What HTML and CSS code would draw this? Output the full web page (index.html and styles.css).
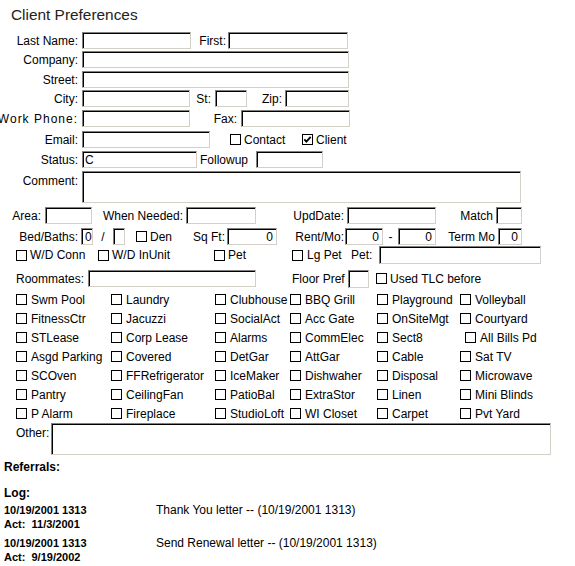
FILE: index.html
```html
<!DOCTYPE html>
<html>
<head>
<meta charset="utf-8">
<title>Client Preferences</title>
<link rel="stylesheet" href="styles.css">
</head>
<body>
<div class="page">
  <h1 class="title">Client Preferences</h1>

  <div class="row r1">
    <label class="lab w78">Last Name:</label><input class="fld ml4 w109">
    <label class="lab w35">First:</label><input class="fld ml2 w120">
  </div>
  <div class="row mt2">
    <label class="lab w78">Company:</label><input class="fld ml4 w267">
  </div>
  <div class="row mt3">
    <label class="lab w78">Street:</label><input class="fld ml4 w267">
  </div>
  <div class="row mt2">
    <label class="lab w78">City:</label><input class="fld ml4 w108">
    <label class="lab w21">St:</label><input class="fld ml4 w32">
    <label class="lab w35">Zip:</label><input class="fld ml3 w64">
  </div>
  <div class="row mt3">
    <label class="lab w78 wide">Work Phone:</label><input class="fld ml4 w108">
    <label class="lab w47">Fax:</label><input class="fld ml4 w109">
  </div>
  <div class="row mt4">
    <label class="lab w78">Email:</label><input class="fld ml4 w128">
    <span class="chk ml20 w72"><span class="cb"></span>Contact</span>
    <span class="chk"><svg class="cbsvg" width="11" height="11" viewBox="0 0 11 11"><rect x="0.5" y="0.5" width="10" height="10" fill="#fff" stroke="#000"/><path d="M2.3 5.3 L4.4 7.6 L8.7 2.8" fill="none" stroke="#000" stroke-width="1.8"/></svg>Client</span>
  </div>
  <div class="row mt3">
    <label class="lab w78">Status:</label><input class="fld ml4 w115" value="C">
    <label class="lab left ml3 w53">Followup</label><input class="fld ml3 w67">
  </div>
  <div class="row tall mt3">
    <label class="lab w78 top">Comment:</label><textarea class="fld area ml4 w439"></textarea>
  </div>
  <div class="row mt4">
    <label class="lab w41">Area:</label><input class="fld ml4 w47">
    <label class="lab w91">When Needed:</label><input class="fld ml3 w70">
    <label class="lab w88">UpdDate:</label><input class="fld ml3 w89">
    <label class="lab w57">Match</label><input class="fld ml3 w26">
  </div>
  <div class="row mt4">
    <label class="lab w78">Bed/Baths:</label><input class="fld ml3 w12 tiny" value="0">
    <span class="sep w20">/</span><input class="fld w12 tiny">
    <span class="chk ml11 w50"><span class="cb"></span>Den</span>
    <label class="lab w39">Sq Ft:</label><input class="fld ml2 w50 num" value="0">
    <label class="lab w67">Rent/Mo:</label><input class="fld ml1 w38 num" value="0">
    <span class="sep w15">-</span><input class="fld w38 num" value="0">
    <label class="lab w59">Term Mo</label><input class="fld ml3 w24 num" value="0">
  </div>
  <div class="row h18 mt1 indent">
    <span class="chk w82"><span class="cb"></span>W/D Conn</span>
    <span class="chk w116"><span class="cb"></span>W/D InUnit</span>
    <span class="chk w78"><span class="cb"></span>Pet</span>
    <span class="chk w59 wgap"><span class="cb"></span>Lg Pet</span>
    <label class="lab left w28">Pet:</label><input class="fld h18 w162">
  </div>
  <div class="row mt6 indent">
    <label class="lab left w72">Roommates:</label><input class="fld w168">
    <label class="lab left ml36 w56">Floor Pref</label><input class="fld h18 w21">
    <span class="chk ml7"><span class="cb"></span>Used TLC before</span>
  </div>

  <div class="amenities">
    <span class="chk"><span class="cb"></span>Swm Pool</span>
    <span class="chk"><span class="cb"></span>Laundry</span>
    <span class="chk"><span class="cb"></span>Clubhouse</span>
    <span class="chk"><span class="cb"></span>BBQ Grill</span>
    <span class="chk"><span class="cb"></span>Playground</span>
    <span class="chk"><span class="cb"></span>Volleyball</span>

    <span class="chk"><span class="cb"></span>FitnessCtr</span>
    <span class="chk"><span class="cb"></span>Jacuzzi</span>
    <span class="chk"><span class="cb"></span>SocialAct</span>
    <span class="chk"><span class="cb"></span>Acc Gate</span>
    <span class="chk"><span class="cb"></span>OnSiteMgt</span>
    <span class="chk"><span class="cb"></span>Courtyard</span>

    <span class="chk"><span class="cb"></span>STLease</span>
    <span class="chk"><span class="cb"></span>Corp Lease</span>
    <span class="chk"><span class="cb"></span>Alarms</span>
    <span class="chk"><span class="cb"></span>CommElec</span>
    <span class="chk"><span class="cb"></span>Sect8</span>
    <span class="chk shift"><span class="cb"></span>All Bills Pd</span>

    <span class="chk"><span class="cb"></span>Asgd Parking</span>
    <span class="chk"><span class="cb"></span>Covered</span>
    <span class="chk"><span class="cb"></span>DetGar</span>
    <span class="chk"><span class="cb"></span>AttGar</span>
    <span class="chk"><span class="cb"></span>Cable</span>
    <span class="chk"><span class="cb"></span>Sat TV</span>

    <span class="chk"><span class="cb"></span>SCOven</span>
    <span class="chk"><span class="cb"></span>FFRefrigerator</span>
    <span class="chk"><span class="cb"></span>IceMaker</span>
    <span class="chk"><span class="cb"></span>Dishwaher</span>
    <span class="chk"><span class="cb"></span>Disposal</span>
    <span class="chk"><span class="cb"></span>Microwave</span>

    <span class="chk"><span class="cb"></span>Pantry</span>
    <span class="chk"><span class="cb"></span>CeilingFan</span>
    <span class="chk"><span class="cb"></span>PatioBal</span>
    <span class="chk"><span class="cb"></span>ExtraStor</span>
    <span class="chk"><span class="cb"></span>Linen</span>
    <span class="chk"><span class="cb"></span>Mini Blinds</span>

    <span class="chk"><span class="cb"></span>P Alarm</span>
    <span class="chk"><span class="cb"></span>Fireplace</span>
    <span class="chk"><span class="cb"></span>StudioLoft</span>
    <span class="chk"><span class="cb"></span>WI Closet</span>
    <span class="chk"><span class="cb"></span>Carpet</span>
    <span class="chk"><span class="cb"></span>Pvt Yard</span>
  </div>

  <div class="row tall indent">
    <label class="lab left top w35">Other:</label><textarea class="fld area w500"></textarea>
  </div>

  <div class="section referrals">Referrals:</div>
  <div class="section log-title">Log:</div>
  <div class="log">
    <div class="entry">
      <div class="when">10/19/2001 1313<br>Act:&nbsp; 11/3/2001</div>
      <div class="what">Thank You letter -- (10/19/2001 1313)</div>
    </div>
    <div class="entry">
      <div class="when">10/19/2001 1313<br>Act:&nbsp; 9/19/2002</div>
      <div class="what">Send Renewal letter -- (10/19/2001 1313)</div>
    </div>
  </div>
</div>
</body>
</html>
```

FILE: styles.css
```css
html, body {
  margin: 0;
  padding: 0;
  background: #fff;
}

body {
  font-family: "Liberation Sans", Arial, sans-serif;
  font-size: 12px;
  line-height: 14px;
  color: #000;
  overflow: hidden;
}

.page {
  width: 575px;
}

.title {
  margin: 0;
  padding: 6px 0 0 11px;
  font-size: 15.4px;
  font-weight: normal;
  line-height: 18px;
  color: #222;
}

/* rows */
.row {
  display: flex;
  align-items: center;
  height: 17px;
}
.row.tall { height: 32px; align-items: flex-start; }
.row.h18 { height: 18px; }
.row.indent { padding-left: 16px; }
.r1 { margin-top: 8px; }

.mt1 { margin-top: 1px; }
.mt2 { margin-top: 2px; }
.mt3 { margin-top: 3px; }
.mt4 { margin-top: 4px; }
.mt6 { margin-top: 6px; }

/* labels */
.lab {
  flex: none;
  display: flex;
  justify-content: flex-end;
  white-space: nowrap;
}
.lab.left { justify-content: flex-start; }
.lab.top { padding-top: 3px; }
.lab.wide { letter-spacing: 1px; }

.sep {
  flex: none;
  text-align: center;
}

/* fields */
.fld {
  flex: none;
  box-sizing: border-box;
  height: 17px;
  margin: 0;
  padding: 0 2px;
  border: 1px solid;
  border-color: #808080 #d4d0c8 #d4d0c8 #808080;
  box-shadow: inset 1px 1px 0 #000;
  background: #fff;
  font-family: "Liberation Sans", Arial, sans-serif;
  font-size: 12px;
  color: #000;
  outline: none;
}
.fld.h18 { height: 18px; }
.fld.area { height: 32px; resize: none; overflow: hidden; }
.fld.num { text-align: right; padding-right: 3px; }
.fld.tiny { padding: 0 0 0 3px; }

/* checkboxes */
.chk {
  flex: none;
  display: flex;
  align-items: center;
  gap: 3px;
  white-space: nowrap;
}
.chk.wgap { gap: 4px; }
.cb {
  flex: none;
  width: 11px;
  height: 11px;
  box-sizing: border-box;
  border: 1px solid #000;
  background: #fff;
}
.cbsvg { flex: none; display: block; }

.amenities {
  display: grid;
  grid-template-columns: 95px 104px 75px 87px 83px auto;
  grid-auto-rows: 19px;
  margin-top: 3px;
  padding-left: 16px;
}
.amenities .chk { gap: 4px; }
.amenities .shift { margin-left: 5px; }

/* bottom */
.section {
  padding-left: 4px;
  font-weight: bold;
  font-size: 12px;
  line-height: 14px;
}
.referrals { margin-top: 5px; }
.log-title { margin-top: 12px; }

.log {
  padding-left: 4px;
  margin-top: 3px;
}
.entry {
  display: grid;
  grid-template-columns: 152px auto;
  margin-bottom: 5px;
}
.when {
  font-weight: bold;
  font-size: 11px;
  line-height: 14px;
}
.what {
  font-size: 12px;
  line-height: 14px;
}

/* spacing / width utilities */
.ml1 { margin-left: 1px; }
.ml2 { margin-left: 2px; }
.ml3 { margin-left: 3px; }
.ml4 { margin-left: 4px; }
.ml7 { margin-left: 7px; }
.ml11 { margin-left: 11px; }
.ml20 { margin-left: 20px; }
.ml36 { margin-left: 36px; }

.w12 { width: 12px; }
.w15 { width: 15px; }
.w20 { width: 20px; }
.w21 { width: 21px; }
.w24 { width: 24px; }
.w26 { width: 26px; }
.w28 { width: 28px; }
.w32 { width: 32px; }
.w35 { width: 35px; }
.w38 { width: 38px; }
.w39 { width: 39px; }
.w41 { width: 41px; }
.w47 { width: 47px; }
.w50 { width: 50px; }
.w53 { width: 53px; }
.w56 { width: 56px; }
.w57 { width: 57px; }
.w59 { width: 59px; }
.w64 { width: 64px; }
.w67 { width: 67px; }
.w70 { width: 70px; }
.w72 { width: 72px; }
.w78 { width: 78px; }
.w82 { width: 82px; }
.w88 { width: 88px; }
.w89 { width: 89px; }
.w91 { width: 91px; }
.w108 { width: 108px; }
.w109 { width: 109px; }
.w115 { width: 115px; }
.w116 { width: 116px; }
.w120 { width: 120px; }
.w128 { width: 128px; }
.w162 { width: 162px; }
.w168 { width: 168px; }
.w267 { width: 267px; }
.w439 { width: 439px; }
.w500 { width: 500px; }
```
